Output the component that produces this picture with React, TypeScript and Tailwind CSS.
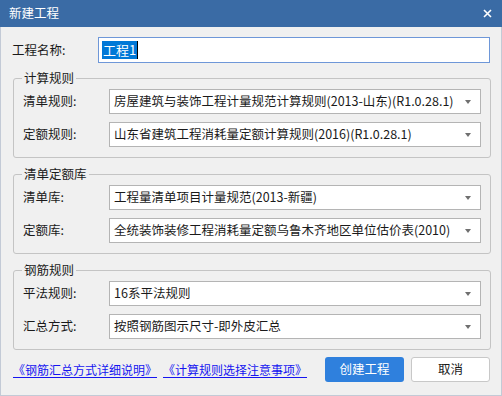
import React from "react";

const font = { fontFamily: '"Noto Sans CJK SC", "Microsoft YaHei", sans-serif' };

const Select = ({ value }: { value: string }) => (
  <div className="flex h-[25px] w-[372px] items-center justify-between border border-[#b4b4b4] bg-white pl-[4px] pr-[9px] text-[12.5px] text-[#1a1a1a]">
    <span className="whitespace-nowrap leading-none">{value}</span>
    <span className="h-0 w-0 border-x-[3.5px] border-t-[4px] border-x-transparent border-t-[#6f6f6f]" />
  </div>
);

const Row = ({ label, value }: { label: string; value: string }) => (
  <div className="flex items-center">
    <span className="w-[95px] pl-[9px] text-[12.5px] leading-none text-[#1a1a1a]">{label}</span>
    <Select value={value} />
  </div>
);

const Group = ({ title, rows }: { title: string; rows: { label: string; value: string }[] }) => (
  <div className="relative ml-[12px] w-[478px] rounded-[3px] border border-[#c4c4c4] pt-[10px] pb-[10px]">
    <span className="absolute left-[8px] top-[-9px] bg-[#f0f0f0] px-[2px] text-[12.5px] leading-[16px] text-[#1a1a1a]">
      {title}
    </span>
    <div className="flex flex-col gap-[8px]">
      {rows.map((r) => (
        <Row key={r.label} {...r} />
      ))}
    </div>
  </div>
);

export default function App() {
  return (
    <div style={font} className="flex h-[396px] w-[502px] flex-col bg-[#f0f0f0]">
      <div className="flex h-[27px] shrink-0 items-center justify-between bg-[#3a6ba5] pl-[9px] pr-[9px] text-white">
        <span className="text-[12.5px] leading-none">新建工程</span>
        <svg width="9" height="9" viewBox="0 0 9 9" className="mr-[1px]">
          <path d="M1 1L8 8M8 1L1 8" stroke="white" strokeWidth="1.6" />
        </svg>
      </div>
      <div className="flex flex-1 flex-col border-x border-b border-[#c3cad6]">
        <div className="mt-[10px] flex items-center">
          <span className="w-[97px] pl-[11px] text-[12.5px] leading-none text-[#1a1a1a]">工程名称:</span>
          <div className="flex h-[26px] w-[392px] items-center border border-[#6e97d8] bg-white pl-[3px]">
            <span className="bg-[#0078d7] px-[1px] text-[13px] leading-[18px] text-white">工程1</span>
            <span className="h-[18px] w-[1px] bg-black" />
          </div>
        </div>
        <div className="mt-[15px] flex flex-col gap-[16px]">
          <Group
            title="计算规则"
            rows={[
              { label: "清单规则:", value: "房屋建筑与装饰工程计量规范计算规则(2013-山东)(R1.0.28.1)" },
              { label: "定额规则:", value: "山东省建筑工程消耗量定额计算规则(2016)(R1.0.28.1)" },
            ]}
          />
          <Group
            title="清单定额库"
            rows={[
              { label: "清单库:", value: "工程量清单项目计量规范(2013-新疆)" },
              { label: "定额库:", value: "全统装饰装修工程消耗量定额乌鲁木齐地区单位估价表(2010)" },
            ]}
          />
          <Group
            title="钢筋规则"
            rows={[
              { label: "平法规则:", value: "16系平法规则" },
              { label: "汇总方式:", value: "按照钢筋图示尺寸-即外皮汇总" },
            ]}
          />
        </div>
        <div className="mt-[7px] flex items-center">
          <a className="ml-[12px] w-[144px] whitespace-nowrap text-[12px] leading-[16px] text-[#1515f0] underline underline-offset-2">《钢筋汇总方式详细说明》</a>
          <a className="ml-[6px] w-[144px] whitespace-nowrap text-[12px] leading-[16px] text-[#1515f0] underline underline-offset-2">《计算规则选择注意事项》</a>
          <button className="ml-[18px] h-[25px] w-[79px] rounded-[3px] bg-[#2f80dd] text-[12.5px] text-white">创建工程</button>
          <button className="ml-[7px] h-[25px] w-[79px] rounded-[3px] border border-[#c8c8c8] bg-white text-[12.5px] text-[#1a1a1a]">取消</button>
        </div>
      </div>
    </div>
  );
}
